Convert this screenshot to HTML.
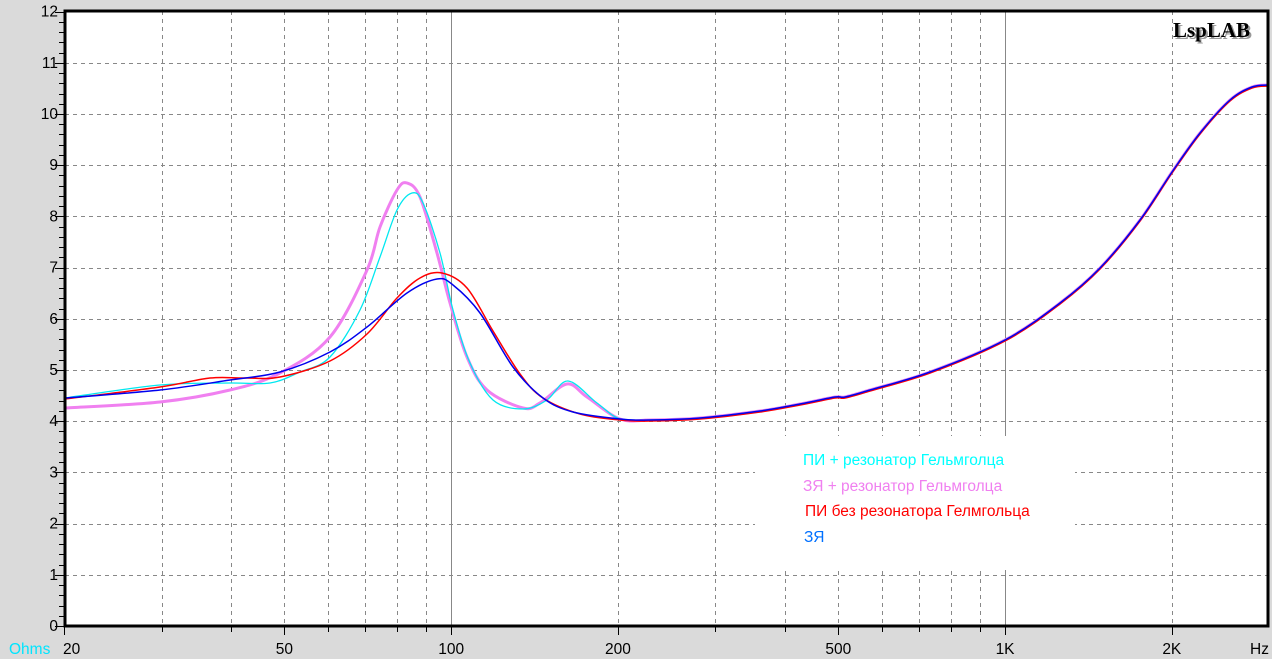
<!DOCTYPE html>
<html><head><meta charset="utf-8"><style>
html,body{margin:0;padding:0;background:#dadada;}
svg{display:block;font-family:"Liberation Sans",Arial,sans-serif;}
</style></head><body>
<svg id="s" width="1272" height="659" viewBox="0 0 1272 659" xmlns="http://www.w3.org/2000/svg">
<rect width="1272" height="659" fill="#dadada"/>
<rect x="65" y="11" width="1203" height="615" fill="#fff"/>
<g id="grid"></g>
<rect x="755" y="436" width="320" height="134" fill="#fff"/>
<g id="curves" fill="none" stroke-linejoin="round"></g>
<rect x="65" y="11" width="1203" height="615" fill="none" stroke="#000" stroke-width="3"/>
<g id="ticks" stroke="#000" stroke-width="1"></g>
<g font-size="15.5" fill="#000" text-anchor="end" id="ylab"></g>
<g font-size="15.5" fill="#000" id="xlab"></g>
<text x="9" y="654" font-size="15.5" fill="#00e5ff">Ohms</text>
<text x="1175" y="39" font-family="Liberation Serif,serif" font-weight="bold" font-size="21" fill="#999">LspLAB</text>
<text x="1173" y="37" font-family="Liberation Serif,serif" font-weight="bold" font-size="21" fill="#000">LspLAB</text>
<g font-size="15.5">
<text x="803" y="465" fill="#00ffff">ПИ + резонатор Гельмголца</text>
<text x="803" y="491" fill="#f080f0">ЗЯ + резонатор Гельмголца</text>
<text x="805" y="516" fill="#ff0000">ПИ без резонатора Гелмгольца</text>
<text x="804" y="542" fill="#0070ff">ЗЯ</text>
</g>
</svg>
<script>
var NS="http://www.w3.org/2000/svg";
function el(p,t,a,txt){var e=document.createElementNS(NS,t);for(var k in a)e.setAttribute(k,a[k]);if(txt!=null)e.textContent=txt;document.getElementById(p).appendChild(e);return e;}
function X(f){return 64+553.9*Math.log10(f/20);}
function Y(v){return 626-51.2*v;}
for(var v=1;v<12;v++){var y=Math.round(Y(v))+.5;el("grid","line",{x1:65,x2:1268,y1:y,y2:y,stroke:"#888","stroke-dasharray":"4,4"});}
var fs=[30,40,50,60,70,80,90,100,200,300,400,500,600,700,800,900,1000,2000];
fs.forEach(function(f){var x=Math.round(X(f))+.5;var solid=(f==100||f==1000);
el("grid","line",{x1:x,x2:x,y1:11,y2:626,stroke:"#888","stroke-dasharray":solid?"none":"4,4"});});
for(var i=0;i<=60;i++){var y=Math.round(Y(i/5))+.5;var L=(i%5==0)?9:5;el("ticks","line",{x1:64-L,x2:64,y1:y,y2:y});}
var all=[20,30,40,50,60,70,80,90,100,200,300,400,500,600,700,800,900,1000,2000];
var maj=[20,50,100,200,500,1000,2000];
all.forEach(function(f){var x=Math.round(X(f))+.5;var L=maj.indexOf(f)>=0?8:5;el("ticks","line",{x1:x,x2:x,y1:627,y2:627+L});});
for(var v=0;v<=12;v++){el("ylab","text",{x:58,y:Y(v)+5},String(v));}
var xl=[[20,"20"],[50,"50"],[100,"100"],[200,"200"],[500,"500"],[1000,"1K"],[2000,"2K"]];
xl.forEach(function(p){el("xlab","text",{x:X(p[0])+(p[0]==20?-1:0),y:654,"text-anchor":p[0]==20?"start":"middle"},p[1]);});
el("xlab","text",{x:1250,y:654},"Hz");
var tail=[[620,419],[650,420],[700,418],[760,411],[800,404],[835,397],[845,397],[870,390],[930,372],[1005,340],[1060,303],[1100,268],[1140,220],[1172,172],[1200,133],[1230,100],[1252,87],[1268,85]];
function path(pts){var d="M"+pts[0][0]+","+pts[0][1];for(var i=0;i<pts.length-1;i++){var p0=pts[Math.max(0,i-1)],p1=pts[i],p2=pts[i+1],p3=pts[Math.min(pts.length-1,i+2)];
var c1=[p1[0]+(p2[0]-p0[0])/6,p1[1]+(p2[1]-p0[1])/6],c2=[p2[0]-(p3[0]-p1[0])/6,p2[1]-(p3[1]-p1[1])/6];
d+=" C"+c1[0].toFixed(1)+","+c1[1].toFixed(1)+" "+c2[0].toFixed(1)+","+c2[1].toFixed(1)+" "+p2[0]+","+p2[1];}return d;}
var red=[[65,398],[160,386],[210,377],[245,377],[280,376],[330,360],[367,333],[397,297],[420,277],[442,272],[467,287],[493,330],[520,373],[543,397],[580,413]].concat(tail);
var blue=[[65,398],[160,390],[230,380],[280,372],[330,352],[367,327],[407,293],[437,279],[453,285],[480,313],[513,367],[543,398],[573,412]].concat(tail);
var cyan=[[65,398],[160,385],[230,383],[270,383],[300,372],[330,357],[360,310],[380,257],[397,210],[412,193],[423,203],[440,253],[453,310],[470,363],[493,400],[523,409],[547,400],[568,381],[597,403]].concat(tail);
var mag=[[65,408],[160,402],[230,390],[280,373],[330,337],[367,270],[380,227],[397,190],[407,183],[420,197],[437,253],[450,303],[467,357],[487,390],[523,408],[540,403],[567,384],[587,397]].concat(tail);
el("curves","path",{d:path(mag),stroke:"#f080f0","stroke-width":3});
el("curves","path",{d:path(cyan),stroke:"#00e8f0","stroke-width":1.3});
el("curves","path",{d:path(red),stroke:"#ff0000","stroke-width":1.5,transform:"translate(0,1)"});
el("curves","path",{d:path(blue),stroke:"#0000ee","stroke-width":1.5});
</script>
</body></html>
